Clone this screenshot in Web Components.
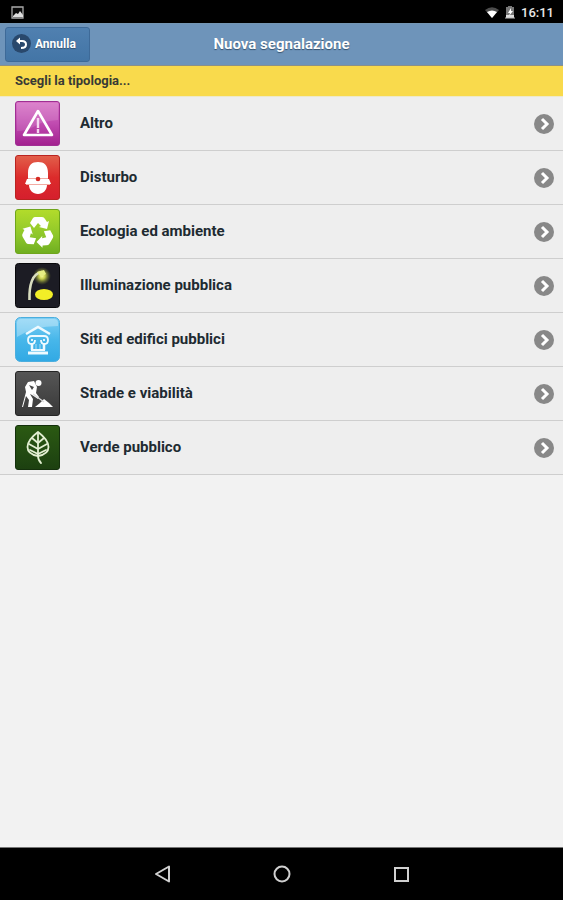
<!DOCTYPE html>
<html lang="it">
<head>
<meta charset="utf-8">
<meta name="viewport" content="width=device-width, initial-scale=1">
<title>Nuova segnalazione</title>
<style>
html, body { margin: 0; height: 100%; }
body { background: #f2f2f2; font-family: Roboto, "Liberation Sans", sans-serif; }
</style>
</head>
<body>
<report-screen></report-screen>

<script>
function define(name, html) {
  const template = document.createElement('template');
  template.innerHTML = html;
  customElements.define(name, class extends HTMLElement {
    constructor() {
      super();
      this.attachShadow({ mode: 'open' }).append(template.content.cloneNode(true));
    }
  });
}

const glyphs = {
  altro: `<defs><linearGradient id="g" x2="0" y2="1"><stop stop-color="#d873c6"/><stop offset=".5" stop-color="#c04bb0"/><stop offset="1" stop-color="#a2208f"/></linearGradient></defs>
    <rect x=".5" y=".5" width="44" height="44" rx="2.5" fill="url(#g)" stroke="#a02f93"/>
    <path d="M2 2h41v17Q28 20 20 25T2 30z" fill="#fff" opacity=".13"/>
    <path d="M23 10 37 34H9z" fill="none" stroke="#fff" stroke-width="2.6" stroke-linejoin="round"/>
    <path d="M23 17v10M23 28v4" stroke="#f6d6f0" stroke-width="2.4"/>`,
  disturbo: `<defs><linearGradient id="g" x2="0" y2="1"><stop stop-color="#e2604b"/><stop offset=".5" stop-color="#dc2b2b"/><stop offset="1" stop-color="#d51f2d"/></linearGradient></defs>
    <rect x=".5" y=".5" width="44" height="44" rx="2.5" fill="url(#g)" stroke="#b92320"/>
    <path d="M13 23V18C13 10 17 7 23 7s10 3 10 11v5zM12 24h22l2 5H10zM14 30h18c0 5-4 9-9 9s-9-4-9-9z" fill="#fff"/>
    <path d="M13 23.500h20M11 29.500h24" stroke="#f3aaa2"/>
    <circle cx="23" cy="24" r="2.300" fill="#d52a24"/>`,
  ecologia: `<defs><linearGradient id="g" x2="0" y2="1"><stop stop-color="#b3dc2b"/><stop offset=".6" stop-color="#8dc62a"/><stop offset="1" stop-color="#6fae20"/></linearGradient></defs>
    <rect x=".5" y=".5" width="44" height="44" rx="2.5" fill="url(#g)" stroke="#6fa51c"/>
    <g fill="#fff"><path id="a" d="M15 14 18 9q1-1 2-1h7q2 0 3 2l2 3 2-1-2 8-8-2 2-1-3-3-4 5z"/>
    <path d="M15 14 18 9q1-1 2-1h7q2 0 3 2l2 3 2-1-2 8-8-2 2-1-3-3-4 5z" transform="rotate(120 23 23.500)"/>
    <path d="M15 14 18 9q1-1 2-1h7q2 0 3 2l2 3 2-1-2 8-8-2 2-1-3-3-4 5z" transform="rotate(240 23 23.500)"/></g>`,
  luce: `<defs><radialGradient id="h"><stop stop-color="#ffff9a"/><stop offset=".35" stop-color="#d6df4e" stop-opacity=".9"/><stop offset="1" stop-color="#77802e" stop-opacity="0"/></radialGradient></defs>
    <rect x=".5" y=".5" width="44" height="44" rx="3" fill="#1c1c24" stroke="#08080b"/>
    <circle cx="27" cy="13" r="9" fill="url(#h)"/>
    <path d="M14.500 37C14 23 17 10 27 9" fill="none" stroke="#d9ddbf" stroke-width="2.6"/>
    <path d="m22 9 7-2 2 4-5 3z" fill="#e7ee83"/>
    <ellipse cx="29" cy="31.500" rx="9" ry="5.500" fill="#f2ee27"/>`,
  siti: `<defs><linearGradient id="g" x2="0" y2="1"><stop stop-color="#7fcff4"/><stop offset=".5" stop-color="#48b7ea"/><stop offset="1" stop-color="#31a9e4"/></linearGradient></defs>
    <rect x=".5" y=".5" width="44" height="44" rx="5" fill="url(#g)" stroke="#4baede"/>
    <path d="M2 6q0-4 4-4h33q4 0 4 4v3Q18 9 2 20z" fill="#fff" opacity=".3"/>
    <g fill="none" stroke="#eefaff" stroke-width="2"><path d="m11 17 12-7 12 7" stroke-width="2.600"/>
    <path d="M20 23q0 4-3.500 4T13 23q0-4 4-4h12q4 0 4 4t-3.500 4T26 23M17 22v2M29 22v2" stroke-width="1.800"/>
    <path d="M17 27v6M29 27v6" stroke-width="2.500"/><path d="M21 27v6M25 27v6" stroke-width="1" opacity=".6"/><path d="M16 33h14" stroke-width="2"/><path d="M13 36h20" stroke-width="3"/></g>`,
  strade: `<defs><linearGradient id="g" x2="0" y2="1"><stop stop-color="#565656"/><stop offset="1" stop-color="#383838"/></linearGradient></defs>
    <rect x=".5" y=".5" width="44" height="44" rx="2.500" fill="url(#g)" stroke="#252525"/>
    <g fill="#fff"><circle cx="23.500" cy="12" r="3"/><path d="m13 11 6-1 3 6-1 6 3 4-1 2-6-4-2-1 3 5-1 8h-4l1-7-3-4-3 11H7l4-15-1-5zM20 36l5-4 4-4 5 4 4 4z"/></g>
    <path d="m18 23 11 8" stroke="#ddd" stroke-width="1.300"/><path d="m14 14 3 5 2-3z" fill="#484848"/>`,
  verde: `<defs><linearGradient id="g" x2="0" y2="1"><stop stop-color="#2b5a12"/><stop offset=".5" stop-color="#244d12"/><stop offset="1" stop-color="#1c4010"/></linearGradient></defs>
    <rect x=".5" y=".5" width="44" height="44" rx="2.500" fill="url(#g)" stroke="#14300c"/>
    <g fill="none" stroke="#e3efd2" stroke-width="1.800" stroke-linecap="round"><path d="M23 7c8 6 10.500 11 10.500 15 0 5-4.500 8-10.500 9-6-1-10.500-4-10.500-9 0-4 2.500-9 10.500-15z"/><path d="M23 8v23q0 4 3 7"/><path d="m17 13 6 5 6-5M14 19l9 5 9-5M15 25l8 4 8-4"/></g>`
};

define('device-status', `<style>
  :host { display: flex; align-items: center; box-sizing: border-box; height: 23px; padding: 1px 9px 0 11px; background: #000; color: #e8e8e8; font-size: 13px; font-weight: 500; }
  .photo { margin-right: auto; } svg { display: block; } .wifi { margin-right: 4px; } .battery { margin-right: 5px; }
  </style>
  <svg class="photo" width="13" height="13" viewBox="0 0 13 13" aria-hidden="true"><path d="M1 1h11v11H1z" fill="#080808" stroke="#aaa" stroke-width="1.300"/><path d="M2 10 5 7l2 1 2-3 3 4v2H2z" fill="#ddd"/></svg>
  <svg class="wifi" width="16" height="13" viewBox="0 0 16 13" aria-hidden="true"><path d="M1 4q7-5.500 14 0L8 12z" fill="#4c4c4c"/><path d="M3 6q5-3 10 0l-5 6z" fill="#fff"/></svg>
  <svg class="battery" width="12" height="14" viewBox="0 0 12 14" aria-hidden="true"><path d="M4 1h4v1h2v11H2V2h2z" fill="#777"/><path d="M2 10h8v3H2z" fill="#ddd"/><path d="M7 3 4 8h2l-1 3 4-5H7z" fill="#fff"/><path d="M1 13h10" stroke="#bbb"/></svg>
  <slot></slot>`);

define('page-header', `<style>
  :host { display: grid; grid-template-columns: 1fr auto 1fr; align-items: center; box-sizing: border-box; height: 43px; padding: 0 5px; background: #6e94ba; border-top: 1px solid #7496b3; border-bottom: 1px solid #8c9087; color: #fff; text-shadow: 0 1px 1px #35516d; }
  button { justify-self: start; display: flex; align-items: center; gap: 4px; height: 35px; box-sizing: border-box; padding: 0 13px 2px 6px; border: 1px solid #3e6a98; border-radius: 3px; background: linear-gradient(#5080b0, #4375a6); color: inherit; font: bold 12px Roboto, sans-serif; text-shadow: inherit; }
  h1 { margin: 0; padding-bottom: 2px; font-size: 15px; line-height: 20px; font-weight: 700; }
  </style>
  <button type="button"><svg width="19" height="19" viewBox="0 0 19 19" aria-hidden="true"><circle cx="9.500" cy="9.500" r="9.500" fill="#29486c"/><path d="M6 7h4q4 0 4 3.500T9 14" fill="none" stroke="#fff" stroke-width="2"/><path d="M4 7 8 3.500v7z" fill="#fff"/></svg><slot name="back"></slot></button>
  <h1><slot></slot></h1>`);

define('section-label', `<style>
  :host { display: block; padding: 5px 15px; background: #f9da4c; border-bottom: 1px solid #eee9c8; color: #383a35; font-size: 13px; line-height: 20px; font-weight: 700; }
  h2 { margin: 0; font: inherit; }
  </style><h2><slot></slot></h2>`);

customElements.define('category-icon', class extends HTMLElement {
  constructor() { super(); this.attachShadow({ mode: 'open' }); }
  connectedCallback() {
    this.shadowRoot.innerHTML = `<style>:host { display: block; flex: none; } svg { display: block; }</style>
      <svg width="45" height="45" viewBox="0 0 45 45" aria-hidden="true">${glyphs[this.getAttribute('name')]}</svg>`;
  }
});

define('category-row', `<style>
  :host { display: block; }
  a { display: flex; align-items: center; gap: 20px; box-sizing: border-box; height: 54px; padding: 0 9px 0 15px; border-bottom: 1px solid #cecece; background: #eee; color: #202a31; text-decoration: none; font-size: 15px; line-height: 20px; font-weight: 700; }
  .label { flex: 1; padding-bottom: 2px; } .arrow { display: block; flex: none; }
  </style>
  <a href="#"><slot name="icon"></slot><span class="label"><slot></slot></span>
  <svg class="arrow" width="20" height="20" viewBox="0 0 20 20" aria-hidden="true"><circle cx="10" cy="10" r="10" fill="#888"/><path d="m8 5 5 5-5 5" fill="none" stroke="#fff" stroke-width="3"/></svg></a>`);

define('device-nav', `<style>
  :host { display: flex; justify-content: center; align-items: center; gap: 84px; box-sizing: border-box; height: 53px; border-top: 1px solid #777; background: #000; }
  button { display: grid; place-items: center; width: 36px; height: 36px; padding: 0; border: 0; background: none; }
  svg { fill: none; stroke: #d0d0d0; stroke-width: 2; }
  </style>
  <button type="button" aria-label="Indietro"><svg width="18" height="18" viewBox="0 0 18 18"><path d="M16 1.500v15L3 9z" stroke-linejoin="round"/></svg></button>
  <button type="button" aria-label="Home"><svg width="18" height="18" viewBox="0 0 18 18"><circle cx="9" cy="9" r="7.500"/></svg></button>
  <button type="button" aria-label="Recenti"><svg width="18" height="18" viewBox="0 0 18 18"><path d="M2 3h13v13H2z"/></svg></button>`);

const rows = [['altro', 'Altro'], ['disturbo', 'Disturbo'], ['ecologia', 'Ecologia ed ambiente'], ['luce', 'Illuminazione pubblica'], ['siti', 'Siti ed edifici pubblici'], ['strade', 'Strade e viabilità'], ['verde', 'Verde pubblico']];
define('report-screen', `<style>
  :host { display: flex; flex-direction: column; min-height: 100vh; background: #f2f2f2; }
  main { flex: 1; }
  </style>
  <device-status>16:11</device-status>
  <page-header><span slot="back">Annulla</span>Nuova segnalazione</page-header>
  <main><section-label>Scegli la tipologia...</section-label>
  ${rows.map(([icon, label]) => `<category-row><category-icon slot="icon" name="${icon}"></category-icon>${label}</category-row>`).join('')}
  </main>
  <device-nav></device-nav>`);
</script>
</body>
</html>
